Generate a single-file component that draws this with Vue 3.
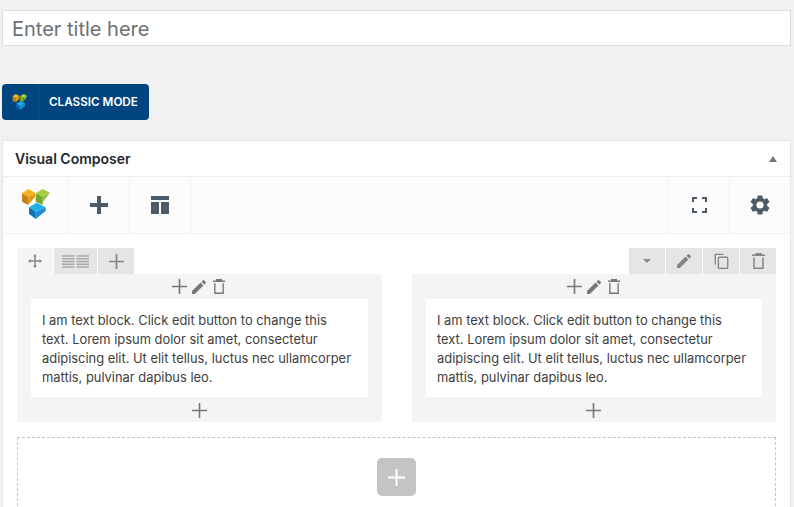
<script setup>
const columns = [0, 1]
const lorem = 'I am text block. Click edit button to change this text. Lorem ipsum dolor sit amet, consectetur adipiscing elit. Ut elit tellus, luctus nec ullamcorper mattis, pulvinar dapibus leo.'
const logoFaces = [
  { points: '1,6.300 7.300,2 14,5.700 7.300,10.300', fill: '#f7b21c' },
  { points: '7.300,10.300 14,5.700 14,10 7.300,18', fill: '#e39c18' },
  { points: '1,6.300 7.300,10.300 7.300,18 1,14.700', fill: '#c37f18' },
  { points: '14.700,6.300 21.700,2 29,5.700 21.700,9.700', fill: '#a6d13c' },
  { points: '21.700,9.700 29,5.700 21.700,15', fill: '#8fbf33' },
  { points: '14.700,6.300 21.700,9.700 21.700,18 14.700,14.700', fill: '#74a62c' },
  { points: '8,20.300 15.700,15.700 24.700,20.300 14.700,24.700', fill: '#1fb0ea' },
  { points: '14.700,24.700 24.700,20.300 24.700,24 14.700,32', fill: '#1a8fd6' },
  { points: '8,20.300 14.700,24.700 14.700,32 8,26.700', fill: '#0a6fb5' },
]
const gear = 'M19.14 12.94c.04-.3.06-.61.06-.94 0-.32-.02-.64-.07-.94l2.03-1.58a.49.49 0 0 0 .12-.61l-1.92-3.32a.488.488 0 0 0-.59-.22l-2.39.96c-.5-.38-1.03-.7-1.62-.94l-.36-2.54a.484.484 0 0 0-.48-.41h-3.84c-.24 0-.43.17-.47.41l-.36 2.54c-.59.24-1.13.57-1.62.94l-2.39-.96a.48.48 0 0 0-.59.22L2.74 8.87c-.12.21-.08.47.12.61l2.03 1.58c-.05.3-.09.63-.09.94s.02.64.07.94l-2.03 1.58a.49.49 0 0 0-.12.61l1.92 3.32c.12.22.37.29.59.22l2.39-.96c.5.38 1.03.7 1.62.94l.36 2.54c.05.24.24.41.48.41h3.84c.24 0 .44-.17.47-.41l.36-2.54c.59-.24 1.13-.56 1.62-.94l2.39.96c.22.08.47 0 .59-.22l1.92-3.32c.12-.22.07-.47-.12-.61l-2.01-1.58zM12 15.6A3.6 3.6 0 1 1 12 8.4a3.6 3.6 0 0 1 0 7.2z'
const pencil = 'M0 16v-3.300L9.800 2.900l3.300 3.300L3.300 16zM10.800 1.900 12.600.2a.7.7 0 0 1 1 0l2.200 2.200a.7.7 0 0 1 0 1L14.100 5.200z'
</script>

<template>
  <div class="page">
    <div class="title-input">Enter title here</div>

    <div class="classic-btn">
      <span class="classic-logo">
        <svg width="16" height="16" viewBox="0 2 30 30">
          <polygon v-for="f in logoFaces" :key="f.points" :points="f.points" :fill="f.fill" />
        </svg>
      </span>
      <span class="classic-label">CLASSIC MODE</span>
    </div>

    <section class="card">
      <header class="card-head">
        <span class="card-title">Visual Composer</span>
        <span class="caret-up"></span>
      </header>

      <div class="toolbar">
        <div class="tool tool-logo">
          <svg class="big-logo" width="30" height="30" viewBox="0 2 30 30">
            <polygon v-for="f in logoFaces" :key="f.points" :points="f.points" :fill="f.fill" />
          </svg>
        </div>
        <div class="tool">
          <svg width="18" height="18" viewBox="0 0 18 18"><path d="M7 0h4v7h7v4h-7v7H7v-7H0V7h7z" fill="#4d5b69" /></svg>
        </div>
        <div class="tool">
          <svg width="18" height="18" viewBox="0 0 18 18"><path d="M0 0h18v4H0zM0 6h8v12H0zM10 6h8v12h-8z" fill="#4d5b69" /></svg>
        </div>
        <div class="toolbar-gap"></div>
        <div class="tool tool-end">
          <svg width="15" height="16" viewBox="0 0 15 16"><path d="M1 5V1h4M10 1h4v4M14 11v4h-4M5 15H1v-4" fill="none" stroke="#4d5b69" stroke-width="2" /></svg>
        </div>
        <div class="tool tool-end">
          <svg width="24" height="24" viewBox="0 0 24 24"><path :d="gear" fill="#4d5b69" /></svg>
        </div>
      </div>

      <div class="content">
        <div class="row-controls">
          <div class="ctl-group">
            <span class="ctl ctl-move">
              <svg width="14" height="14" viewBox="0 0 14 14"><path d="M7 1.500v11M1.500 7h11" stroke="#858585" stroke-width="1.500" /><path d="M7 0l2 2.500H5zM7 14l-2-2.500h4zM0 7l2.500-2v4zM14 7l-2.500 2V5z" fill="#858585" /></svg>
            </span>
            <span class="ctl ctl-layout">
              <svg width="27" height="13" viewBox="0 0 27 13"><path d="M0 1h12.500M14.500 1H27M0 3.750h12.500M14.500 3.750H27M0 6.500h12.500M14.500 6.500H27M0 9.250h12.500M14.500 9.250H27M0 12h12.500M14.500 12H27" stroke="#a8a8a8" stroke-width="1.300" /></svg>
            </span>
            <span class="ctl ctl-plus">
              <svg width="15" height="15" viewBox="0 0 15 15"><path d="M7.500 0v15M0 7.500h15" stroke="#858585" stroke-width="1.700" /></svg>
            </span>
          </div>
          <div class="ctl-group">
            <span class="ctl"><span class="caret-down"></span></span>
            <span class="ctl">
              <svg width="14" height="14" viewBox="0 0 16 16"><path :d="pencil" fill="#858585" /></svg>
            </span>
            <span class="ctl">
              <svg width="15" height="16" viewBox="0 0 16 18"><path d="M1 13V1.500h9" fill="none" stroke="#858585" stroke-width="1.500" /><rect x="4.500" y="4.750" width="10.500" height="12.500" rx="1" fill="none" stroke="#858585" stroke-width="1.500" /></svg>
            </span>
            <span class="ctl">
              <svg width="13" height="16" viewBox="0 0 13 16"><path d="M0 2.250h13M4 2V.75h5V2" fill="none" stroke="#858585" stroke-width="1.500" /><path d="M2 4.500v10.750h9V4.500" fill="none" stroke="#858585" stroke-width="1.500" /></svg>
            </span>
          </div>
        </div>

        <div class="columns">
          <div v-for="c in columns" :key="c" class="column">
            <div class="col-actions">
              <svg width="15" height="15" viewBox="0 0 15 15"><path d="M7.500 0v15M0 7.500h15" stroke="#777" stroke-width="1.600" /></svg>
              <svg width="14" height="14" viewBox="0 0 16 16"><path :d="pencil" fill="#777" /></svg>
              <svg class="trash" width="12" height="15" viewBox="0 0 13 16"><path d="M0 2.250h13M4 2V.75h5V2" fill="none" stroke="#777" stroke-width="1.500" /><path d="M2 4.500v10.750h9V4.500" fill="none" stroke="#777" stroke-width="1.500" /></svg>
            </div>
            <div class="text-block">{{ lorem }}</div>
            <div class="col-bottom">
              <svg width="15" height="15" viewBox="0 0 15 15"><path d="M7.500 0v15M0 7.500h15" stroke="#777" stroke-width="1.600" /></svg>
            </div>
          </div>
        </div>

        <div class="add-zone">
          <div class="add-btn">
            <svg width="17" height="17" viewBox="0 0 17 17"><path d="M8.500 0v17M0 8.500h17" stroke="#fff" stroke-width="2" /></svg>
          </div>
        </div>
      </div>
    </section>
  </div>
</template>

<style>
html, body { margin: 0; background: #f1f1f1; overflow: hidden; }
</style>

<style scoped>
.page {
  width: 794px;
  height: 507px;
  overflow: hidden;
  box-sizing: border-box;
  padding: 10px 3px 0 2px;
  background: #f1f1f1;
  font-family: Inter, "Liberation Sans", sans-serif;
}
.title-input {
  height: 36px;
  box-sizing: border-box;
  background: #fff;
  border: 1px solid #ddd;
  padding-left: 9px;
  font-size: 20px;
  line-height: 36px;
  color: #6c7176;
}
.classic-btn {
  display: flex;
  width: 147px;
  height: 36px;
  margin-top: 38px;
  background: #00457f;
  border-radius: 4px;
  color: #fff;
}
.classic-logo {
  width: 36px;
  display: flex;
  align-items: center;
  justify-content: center;
  border-right: 1px solid #0c5189;
  flex-shrink: 0;
}
.classic-label {
  padding-left: 10px;
  font-size: 11.7px;
  font-weight: 600;
  line-height: 36px;
  white-space: nowrap;
}
.card {
  margin-top: 20px;
  background: #fff;
  border: 1px solid #e5e5e5;
  height: 400px;
  box-sizing: border-box;
}
.card-head {
  height: 35px;
  display: flex;
  align-items: center;
  justify-content: space-between;
  padding: 0 13px 0 12px;
  border-bottom: 1px solid #eee;
}
.card-title {
  font-size: 14px;
  font-weight: 600;
  color: #23282d;
}
.caret-up {
  width: 0;
  height: 0;
  border-left: 4px solid transparent;
  border-right: 4px solid transparent;
  border-bottom: 6px solid #72777c;
}
.toolbar {
  display: flex;
  height: 56px;
  background: #fcfcfc;
  border-bottom: 1px solid #f1f1f1;
}
.tool {
  width: 60px;
  display: flex;
  align-items: center;
  justify-content: center;
  border-right: 1px solid #f1f1f1;
}
.tool-logo { width: 65px; }
.big-logo { margin-bottom: 2px; }
.toolbar-gap { flex: 1; }
.tool-end {
  border-right: 0;
  border-left: 1px solid #f1f1f1;
}
.content { padding: 14px 14px 0; }
.row-controls {
  display: flex;
  justify-content: space-between;
  width: 759px;
}
.ctl-group { display: flex; gap: 1px; }
.ctl {
  height: 26px;
  width: 36px;
  display: flex;
  align-items: center;
  justify-content: center;
  background: #e5e5e5;
}
.ctl-move { background: #f4f4f4; }
.ctl-layout { width: 43px; }
.caret-down {
  width: 0;
  height: 0;
  border-left: 4px solid transparent;
  border-right: 4px solid transparent;
  border-top: 4px solid #888;
}
.columns {
  display: grid;
  grid-template-columns: 365px 364px;
  column-gap: 30px;
  width: 759px;
}
.column {
  background: #f4f4f4;
  height: 148px;
  padding: 0 14px;
  box-sizing: border-box;
}
.col-actions {
  height: 25px;
  display: flex;
  align-items: center;
  justify-content: center;
  gap: 5px;
  padding-right: 2px;
}
.trash { margin-left: 2px; }
.text-block {
  height: 98px;
  box-sizing: border-box;
  background: #fff;
  padding: 12px 11px 0;
  font-size: 12.9px;
  line-height: 19px;
  color: #404040;
}
.col-bottom {
  height: 25px;
  box-sizing: border-box;
  padding: 1px 1px 0 0;
  display: flex;
  align-items: center;
  justify-content: center;
}
.add-zone {
  width: 759px;
  height: 120px;
  margin-top: 15px;
  box-sizing: border-box;
  border: 1px dashed #c4c4c4;
  display: flex;
  justify-content: center;
  padding-top: 20px;
}
.add-btn {
  width: 39px;
  height: 38px;
  border-radius: 5px;
  background: #c4c4c4;
  display: flex;
  align-items: center;
  justify-content: center;
}
</style>
